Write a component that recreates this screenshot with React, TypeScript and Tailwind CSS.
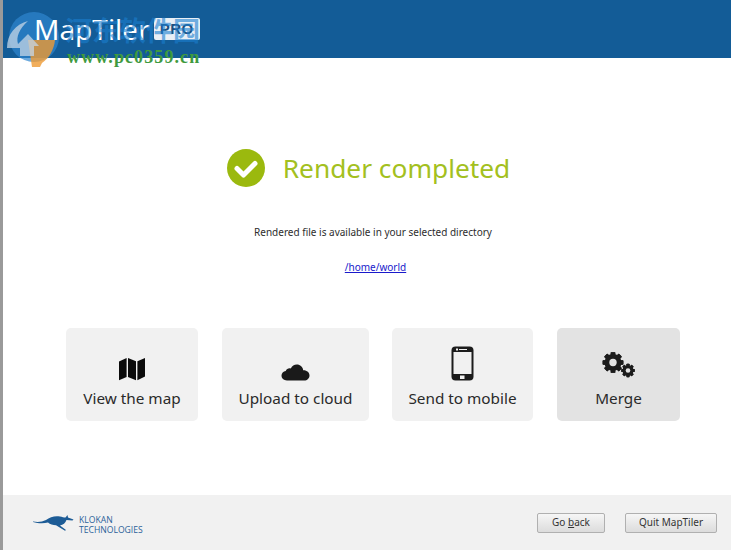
import React from "react";

const F = "font-['Noto_Sans',sans-serif]";

function MapIcon() {
  return (
    <svg width="28" height="24" viewBox="0 0 28 24" fill="#0b0b0b">
      <path d="M1 4.500 8.600 1v19L1 23.200Z" />
      <path d="M10 1l8 3.200V23.200L10 20Z" />
      <path d="M19.400 4.200 27 1v18.600L19.400 23.200Z" />
    </svg>
  );
}
function CloudIcon() {
  return (
    <svg width="29" height="17" viewBox="0 0 29 17" fill="#1a1a1a">
      <path d="M6 16.500C2.600 16.500.5 14.300.5 11.600c0-2.500 1.800-4.300 4.200-4.700C5.700 4.600 7.800 3.800 9.800 4.400 11 2 13.200.5 15.800.5c3.400 0 6.100 2.500 6.400 5.700 3.600-.2 6.300 2.200 6.300 5.300 0 2.900-2.300 5-5.300 5Z" />
    </svg>
  );
}
function PhoneIcon() {
  return (
    <svg width="23" height="35" viewBox="0 0 23 35">
      <rect x="0.500" y="0.500" width="22" height="34" rx="4" fill="#1c1c1c" />
      <rect x="2.500" y="6" width="18" height="22" fill="#f1f1f1" />
      <rect x="9" y="29.500" width="4.500" height="3.500" fill="#f1f1f1" />
      <rect x="8" y="3" width="8" height="1" fill="#f1f1f1" />
      <rect x="5" y="2.500" width="2" height="2" fill="#f1f1f1" />
    </svg>
  );
}
function Gear({ cx, cy, r, hole }: { cx: number; cy: number; r: number; hole: number }) {
  const teeth = [0, 45, 90, 135, 180, 225, 270, 315];
  return (
    <g>
      {teeth.map((a) => (
        <rect
          key={a}
          x={cx - r * 0.27}
          y={cy - r * 1.22}
          width={r * 0.54}
          height={r * 2.44}
          rx={r * 0.08}
          fill="#1c1c1c"
          transform={`rotate(${a} ${cx} ${cy})`}
        />
      ))}
      <circle cx={cx} cy={cy} r={r} fill="#1c1c1c" />
      <circle cx={cx} cy={cy} r={hole} fill="#e3e3e3" />
    </g>
  );
}
function GearsIcon() {
  return (
    <svg width="36" height="26" viewBox="0 0 36 26">
      <Gear cx={12} cy={10.500} r={8.500} hole={3.700} />
      <Gear cx={27} cy={18.500} r={5.500} hole={2.300} />
    </svg>
  );
}

function Tile({ w, label, icon, dark, lift }: { w: string; label: string; icon: React.ReactNode; dark?: boolean; lift?: boolean }) {
  return (
    <div className={`${w} h-[93px] rounded-[5px] flex flex-col items-center ${dark ? "bg-[#e3e3e3]" : "bg-[#f1f1f1]"}`}>
      <div className={`h-[53px] flex items-end justify-center ${lift ? "pb-[3px]" : ""}`}>{icon}</div>
      <div className={`mt-[6px] text-[15.3px] leading-[22px] text-[#2a2a2a] ${F}`}>{label}</div>
    </div>
  );
}

function GtkButton({ w, children }: { w: string; children: React.ReactNode }) {
  return (
    <div className={`${w} h-[20px] rounded-[2px] border border-[#b0b0b0] bg-gradient-to-b from-[#f6f6f6] to-[#dcdcdc] flex items-center justify-center text-[10px] text-[#333] ${F}`}>
      {children}
    </div>
  );
}

export default function App() {
  return (
    <div className="relative w-[731px] h-[550px] overflow-hidden bg-white flex">
      <div className="w-[3px] bg-[#9a9a9a] shrink-0" />
      <div className="flex-1 flex flex-col min-w-0">
        <header className="relative h-[58px] bg-[#135c97] shrink-0 flex items-center pl-[31px]">
          <svg className="absolute left-[1px] top-[10px]" width="60" height="58" viewBox="0 0 60 58">
            <circle cx="30" cy="27" r="25" fill="#2f86cf" fillOpacity="0.7" />
            <path d="M24 30h27c-1 10-6 18-13 23l-2 4h-8Z" fill="#ee9a33" fillOpacity="0.8" />
            <path d="M3 38C3 24 12 14 24 11 15 19 12 27 14 34L24 24l11 12h-5v10H16V38Z" fill="#c4d6e6" fillOpacity="0.75" />
          </svg>
          <span className={`relative text-[28px] leading-none text-white ${F}`}>MapTiler</span>
          <span className="relative ml-[4px] px-[6px] h-[22px] rounded-[2px] bg-[#e9eff5] text-[#1d4f80] text-[15px] leading-[22px] font-bold font-['Liberation_Sans',sans-serif] tracking-[0.5px]">PRO</span>
          <div className="absolute left-[62px] top-[14px] text-[27px] leading-[32px] text-[#1b7fd0]/60 font-['Noto_Sans_CJK_SC',sans-serif] font-bold">河东软件园</div>
          <div className="absolute left-[64px] top-[47px] text-[18px] leading-[20px] font-bold tracking-[1.1px] text-[#3f9a3f] font-['Liberation_Serif',serif]">www.pc0359.cn</div>
        </header>
        <main className="flex-1 flex flex-col items-center">
          <div className="mt-[91px] ml-[3px] flex items-center gap-[18px]">
            <svg width="38" height="38" viewBox="0 0 38 38">
              <circle cx="19" cy="19" r="19" fill="#9bb90e" />
              <path d="M10 19.500l6.500 6.500L28 14.500" fill="none" stroke="#fff" strokeWidth="5" strokeLinecap="round" strokeLinejoin="round" />
            </svg>
            <span className={`text-[26.3px] leading-[38px] text-[#a3c020] ${F}`}>Render completed</span>
          </div>
          <p className={`mt-[37px] ml-[12px] text-[10px] leading-[16px] text-[#2d2d2d] ${F}`}>Rendered file is available in your selected directory</p>
          <a className={`mt-[19px] ml-[17px] text-[10px] leading-[16px] text-[#1a1acb] underline ${F}`}>/home/world</a>
          <div className="mt-[53px] flex pl-[63px] self-start">
            <Tile w="w-[132px]" label="View the map" icon={<MapIcon />} />
            <div className="w-[24px]" />
            <Tile w="w-[147px]" label="Upload to cloud" icon={<CloudIcon />} />
            <div className="w-[23px]" />
            <Tile w="w-[141px]" label="Send to mobile" icon={<PhoneIcon />} />
            <div className="w-[24px]" />
            <Tile w="w-[123px]" label="Merge" icon={<GearsIcon />} dark lift />
          </div>
        </main>
        <footer className="h-[55px] bg-[#f1f1f1] shrink-0 flex items-center pl-[30px] pr-[14px]">
          <svg width="42" height="18" viewBox="0 0 42 18" fill="#1d5c96">
            <path d="M0 7.500C5 8.500 9 8 13 6c4-3 9-4.500 14-3.500 2 .4 4 1 5.500 1L34.500 1l.5 2.500 5.500 2-1 1-6-.5c-1 3-3.500 5-6.500 5.500L33 16l-1 .8-9-5.500c-3 0-6-1-8-2.800-4 1-10 1-15-.5Z" />
          </svg>
          <div className="ml-[4px] mt-[4px] text-[8.6px] leading-[10px] text-[#2b6299] font-['Open_Sans',sans-serif]">
            <div>KLOKAN</div>
            <div>TECHNOLOGIES</div>
          </div>
          <div className="ml-auto flex gap-[20px]">
            <GtkButton w="w-[68px]"><span>Go <span className="underline">b</span>ack</span></GtkButton>
            <GtkButton w="w-[92px]">Quit MapTiler</GtkButton>
          </div>
        </footer>
      </div>
    </div>
  );
}
